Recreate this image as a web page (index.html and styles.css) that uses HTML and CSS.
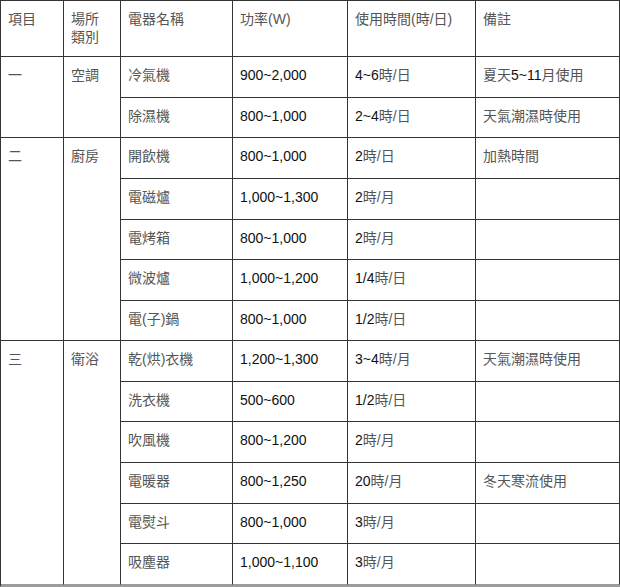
FILE: index.html
```
<!DOCTYPE html>
<html lang="zh-Hant">
<head>
<meta charset="utf-8">
<title>家電用電表</title>
<link rel="stylesheet" href="styles.css">
</head>
<body>
<div class="table">
  <div class="cell zh">項目</div>
  <div class="cell zh">場所<br>類別</div>
  <div class="cell zh">電器名稱</div>
  <div class="cell zh">功率(W)</div>
  <div class="cell zh">使用時間(時/日)</div>
  <div class="cell zh">備註</div>

  <div class="cell zh span2">一</div>
  <div class="cell zh span2">空調</div>
  <div class="cell zh">冷氣機</div>
  <div class="cell">900~2,000</div>
  <div class="cell">4~6<span class="zh">時/日</span></div>
  <div class="cell"><span class="zh">夏天</span>5~11<span class="zh">月使用</span></div>

  <div class="cell zh">除濕機</div>
  <div class="cell">800~1,000</div>
  <div class="cell">2~4<span class="zh">時/日</span></div>
  <div class="cell zh">天氣潮濕時使用</div>

  <div class="cell zh span5">二</div>
  <div class="cell zh span5">廚房</div>
  <div class="cell zh">開飲機</div>
  <div class="cell">800~1,000</div>
  <div class="cell">2<span class="zh">時/日</span></div>
  <div class="cell zh">加熱時間</div>

  <div class="cell zh">電磁爐</div>
  <div class="cell">1,000~1,300</div>
  <div class="cell">2<span class="zh">時/月</span></div>
  <div class="cell"></div>

  <div class="cell zh">電烤箱</div>
  <div class="cell">800~1,000</div>
  <div class="cell">2<span class="zh">時/月</span></div>
  <div class="cell"></div>

  <div class="cell zh">微波爐</div>
  <div class="cell">1,000~1,200</div>
  <div class="cell">1/4<span class="zh">時/日</span></div>
  <div class="cell"></div>

  <div class="cell zh">電(子)鍋</div>
  <div class="cell">800~1,000</div>
  <div class="cell">1/2<span class="zh">時/日</span></div>
  <div class="cell"></div>

  <div class="cell zh span6 end">三</div>
  <div class="cell zh span6 end">衛浴</div>
  <div class="cell zh">乾(烘)衣機</div>
  <div class="cell">1,200~1,300</div>
  <div class="cell">3~4<span class="zh">時/月</span></div>
  <div class="cell zh">天氣潮濕時使用</div>

  <div class="cell zh">洗衣機</div>
  <div class="cell">500~600</div>
  <div class="cell">1/2<span class="zh">時/日</span></div>
  <div class="cell"></div>

  <div class="cell zh">吹風機</div>
  <div class="cell">800~1,200</div>
  <div class="cell">2<span class="zh">時/月</span></div>
  <div class="cell"></div>

  <div class="cell zh">電暖器</div>
  <div class="cell">800~1,250</div>
  <div class="cell">20<span class="zh">時/月</span></div>
  <div class="cell zh">冬天寒流使用</div>

  <div class="cell zh">電熨斗</div>
  <div class="cell">800~1,000</div>
  <div class="cell">3<span class="zh">時/月</span></div>
  <div class="cell"></div>

  <div class="cell zh end">吸塵器</div>
  <div class="cell end">1,000~1,100</div>
  <div class="cell end">3<span class="zh">時/月</span></div>
  <div class="cell end"></div>
</div>
</body>
</html>
```

FILE: styles.css
```
* {
  box-sizing: border-box;
}

html, body {
  margin: 0;
  padding: 0;
  background: #ffffff;
}

body {
  font-family: "Liberation Sans", Arial, "Noto Sans CJK TC", sans-serif;
  font-size: 14px;
  line-height: 18px;
  color: #111111;
}

.table {
  display: grid;
  width: 620px;
  grid-template-columns: 63px 57px 112px 115px 128px 144px;
  grid-template-rows: 56px 41px 40px 41px 41px 40px 41px 40px 41px 40px 41px 41px 40px 41px;
  border-top: 1px solid #333333;
  border-left: 1px solid #333333;
  border-bottom: 2px solid #9c9c9c;
}

.cell {
  border-right: 1px solid #333333;
  border-bottom: 1px solid #333333;
  padding: 9px 7px 0 7px;
  white-space: nowrap;
}

.cell.end {
  border-bottom-color: #9c9c9c;
}

.span2 {
  grid-row: span 2;
}

.span5 {
  grid-row: span 5;
}

.span6 {
  grid-row: span 6;
}

.zh {
  color: #555555;
}
```
